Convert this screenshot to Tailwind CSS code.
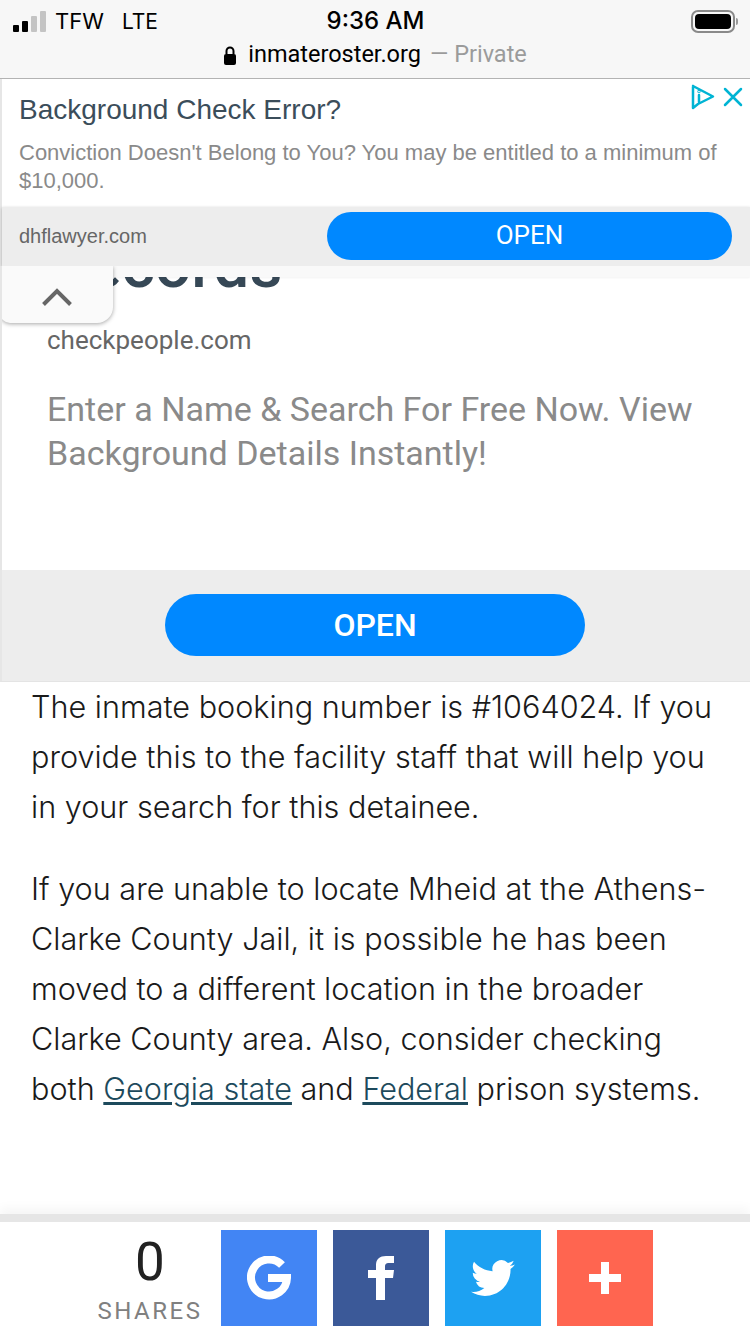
<!DOCTYPE html>
<html lang="en">

<head>
  <meta charset="UTF-8">
  <meta name="viewport" content="width=device-width, initial-scale=1.0">
  <title>Inmate Roster</title>
  <script src="https://cdn.jsdelivr.net/npm/@tailwindcss/browser@4"></script>
</head>

<body class="bg-white w-[750px] h-[1334px] overflow-hidden flex flex-col font-['Roboto',sans-serif] text-[#222]">
  <!-- Status bar and address -->
  <header class="h-[79px] shrink-0 bg-[#f7f7f7] border-b border-[#b3b3b3] relative font-['Inter',sans-serif] text-black">
    <div class="flex items-center justify-between h-[42px] pl-[13px] pr-[12px]">
      <div class="flex items-center w-[260px]">
        <div class="flex items-end gap-[3px] h-[21px]">
          <span class="w-[6px] h-[7px] rounded-[1px] bg-black"></span>
          <span class="w-[6px] h-[11px] rounded-[1px] bg-black"></span>
          <span class="w-[6px] h-[16px] rounded-[1px] bg-[#c4c4c4]"></span>
          <span class="w-[6px] h-[21px] rounded-[1px] bg-[#c4c4c4]"></span>
        </div>
        <span class="ml-[9px] text-[22px] leading-none">TFW</span>
        <span class="ml-[18px] text-[21px] leading-none">LTE</span>
      </div>
      <span class="text-[24px] font-medium leading-none">9:36 AM</span>
      <div class="w-[260px] flex justify-end items-center">
        <div class="w-[44px] h-[23px] rounded-[7px] border-2 border-[#8a8a8a] p-[2px]">
          <div class="w-full h-full bg-black rounded-[4px]"></div>
        </div>
        <span class="w-[2px] h-[7px] ml-[1px] rounded-r-[2px] bg-[#9a9a9a]"></span>
      </div>
    </div>
    <div class="flex items-center justify-center h-[24px] pt-[2px] text-[23.5px] leading-none font-['Roboto',sans-serif]">
      <svg width="14" height="19" viewBox="0 0 14 19" class="mr-[11px]">
        <path d="M3.500 8V5a3.500 3.500 0 0 1 7 0v3" fill="none" stroke="#000" stroke-width="2" />
        <rect x="1" y="8" width="12" height="11" rx="2" fill="#000" />
      </svg>
      <span>inmateroster.org</span>
      <span class="text-[#9b9b9b] ml-[9px]">— Private</span>
    </div>
  </header>

  <!-- Top banner ad -->
  <section class="h-[187px] shrink-0 border-l-2 border-[#e6e6e6] relative font-['Liberation_Sans',sans-serif]">
    <div class="h-[128px] pl-[17px] pr-[28px] pt-[15px]">
      <h2 class="text-[28px] leading-[32px] text-[#3b4d5a]">Background Check Error?</h2>
      <p class="mt-[13px] text-[22px] leading-[28px] text-[#8a8a8a]">Conviction Doesn't Belong to You? You may be entitled to a minimum of $10,000.</p>
    </div>
    <div class="h-[59px] bg-[#ededed] flex items-center justify-between pl-[17px] pr-[18px] pb-[2px] shadow-[0_1px_3px_rgba(0,0,0,0.25)]">
      <span class="text-[20px] text-[#666]">dhflawyer.com</span>
      <button class="w-[405px] h-[48px] rounded-full bg-[#0088ff] text-white text-[26px] font-['Roboto',sans-serif]">OPEN</button>
    </div>
    <div class="absolute top-[5px] right-[7px] flex items-center gap-[8px]">
      <svg width="24" height="26" viewBox="0 0 24 26" fill="none" stroke="#00b4d4" stroke-width="2.5" stroke-linejoin="round" stroke-linecap="round">
        <path d="M2 2 L22 12.500 L7 20 M2 2 V24 L7 20" />
        <path d="M8 11v7" />
        <circle cx="8" cy="7.500" r="0.400" />
      </svg>
      <svg width="20" height="20" viewBox="0 0 20 20" fill="none" stroke="#00b4d4" stroke-width="2.5" stroke-linecap="round">
        <path d="M2 2 L18 18 M18 2 L2 18" />
      </svg>
    </div>
  </section>

  <!-- Inline ad card, scrolled partly under the banner -->
  <section class="h-[416px] shrink-0 flex flex-col overflow-hidden relative border-l-2 border-[#e6e6e6] border-b border-b-[#e4e4e4]">
    <div class="h-[11px] shrink-0 bg-[#f9f9f9] relative z-10 shadow-[0_1px_2px_rgba(0,0,0,0.05)]"></div>
    <div class="flex-1 min-h-0 pl-[45px] pr-[40px]">
      <h2 class="mt-[-43px] text-[64px] leading-[64px] font-medium text-[#364856]">Records</h2>
      <p class="mt-[27px] text-[26px] leading-[30px] text-[#666]">checkpeople.com</p>
      <p class="mt-[32px] text-[34px] leading-[44px] text-[#8a8a8a]">Enter a Name &amp; Search For Free Now. View Background Details Instantly!</p>
    </div>
    <div class="h-[111px] shrink-0 bg-[#ededed] flex items-center justify-center pr-[2px] pb-[2px]">
      <button class="w-[420px] h-[62px] rounded-full bg-[#0088ff] text-white text-[32px] font-medium">OPEN</button>
    </div>
    <div class="absolute z-20 top-0 left-[-2px] w-[113px] h-[57px] rounded-br-[16px] rounded-bl-[10px] bg-[#fafafa] shadow-[0_1px_4px_rgba(0,0,0,0.35)] flex items-center justify-center pt-[5px]">
      <svg width="30" height="18" viewBox="0 0 30 18" fill="none" stroke="#666" stroke-width="4">
        <path d="M1.500 16.500 L15 3 L28.500 16.500" />
      </svg>
    </div>
  </section>

  <!-- Article text -->
  <main class="flex-1 min-h-0 pl-[31px] pr-[30px] text-[30.6px] leading-[50px] font-['Inter',sans-serif] font-light text-[#1a1a1a]">
    <p>The inmate booking number is #1064024. If you provide this to the facility staff that will help you in your search for this detainee.</p>
    <p class="mt-[32px]">If you are unable to locate Mheid at the Athens-Clarke County Jail, it is possible he has been moved to a different location in the broader Clarke County area. Also, consider checking both <a href="#" class="underline text-[#1d4a5c]">Georgia state</a> and <a href="#" class="underline text-[#1d4a5c]">Federal</a> prison systems.</p>
  </main>

  <!-- Share bar -->
  <footer class="h-[120px] shrink-0 border-t-8 border-[#e6e6e6] bg-white flex pt-[8px] pl-[83px] shadow-[0_-6px_10px_rgba(0,0,0,0.04)]">
    <div class="w-[134px] flex flex-col items-center">
      <span class="text-[53px] leading-[60px] mt-[2px] text-[#222]">0</span>
      <span class="text-[24px] leading-[28px] mt-[5px] tracking-[2.5px] text-[#808080]">SHARES</span>
    </div>
    <div class="ml-[4px] flex gap-[16px]">
      <a href="#" class="w-[96px] h-[96px] bg-[#4285f4] flex items-center justify-center">
        <svg width="44" height="44" viewBox="0 0 44 44" fill="none" stroke="#fff" stroke-width="8">
          <path d="M35 9 A18 18 0 1 0 40 22 H21" />
        </svg>
      </a>
      <a href="#" class="w-[96px] h-[96px] bg-[#3b5998] flex items-center justify-center">
        <svg width="26" height="44" viewBox="0 0 26 44" fill="#fff">
          <path d="M8 44 V22 H0 V14 H8 V9 C8 3 12 0 18 0 H26 V7 H21 C18 7 17 8 17 11 V14 H26 L25 22 H17 V44 Z" />
        </svg>
      </a>
      <a href="#" class="w-[96px] h-[96px] bg-[#1da1f2] flex items-center justify-center">
        <svg width="44" height="44" viewBox="0 0 24 24" fill="#fff">
          <path d="M23.950 4.570a10 10 0 0 1-2.820.770 4.960 4.960 0 0 0 2.160-2.720c-.950.550-2 .950-3.130 1.180a4.920 4.920 0 0 0-8.380 4.480C7.690 8.090 4.070 6.130 1.640 3.160a4.820 4.820 0 0 0-.660 2.470c0 1.710.870 3.210 2.190 4.100a4.900 4.900 0 0 1-2.230-.620v.060a4.920 4.920 0 0 0 3.950 4.830 5 5 0 0 1-2.210.080 4.940 4.940 0 0 0 4.600 3.420A9.870 9.870 0 0 1 0 19.540a14 14 0 0 0 7.560 2.210c9.050 0 14-7.500 14-13.980 0-.210 0-.420-.02-.630a9.940 9.940 0 0 0 2.410-2.570z" />
        </svg>
      </a>
      <a href="#" class="w-[96px] h-[96px] bg-[#ff6550] flex items-center justify-center">
        <svg width="32" height="32" viewBox="0 0 32 32" fill="#fff">
          <path d="M12 0 H20 V12 H32 V20 H20 V32 H12 V20 H0 V12 H12 Z" />
        </svg>
      </a>
    </div>
  </footer>
</body>

</html>
